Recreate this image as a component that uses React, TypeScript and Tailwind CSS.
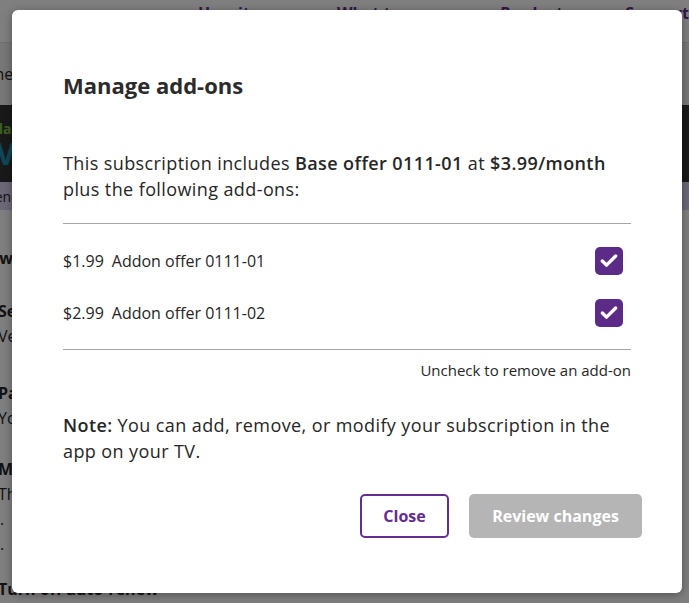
import { Check } from "lucide-react";

const FONT = "font-['Open_Sans',_'Liberation_Sans',_sans-serif]";

type Addon = { id: string; price: string; name: string };

const ADDONS: Addon[] = [
  { id: "a1", price: "$1.99", name: "Addon offer 0111-01" },
  { id: "a2", price: "$2.99", name: "Addon offer 0111-02" },
];

function BackgroundPage() {
  return (
    <div className="h-[603px] w-full overflow-hidden bg-white text-[#262626]">
      <nav className="flex h-[43px] items-start gap-[52px] border-b border-[#ddd] pl-[198px] pt-[1px] text-[16px] font-bold text-[#662d91]">
        <span>How it works</span>
        <span>What to watch ⌄</span>
        <span>Products ⌄</span>
        <span>Support</span>
      </nav>
      <div className="flex h-[62px] items-center bg-[#eee] text-[16px]">
        <span className="-ml-[32px]">Home</span>
      </div>
      <div className="flex h-[77px] flex-col justify-center bg-[#333]">
        <span className="-ml-[10px] text-[14px] font-bold text-[#7dc242]">Plan</span>
        <span className="-ml-[4px] text-[30px] font-bold leading-none text-[#1a8fb0]">V</span>
      </div>
      <div className="flex h-[28px] items-center bg-[#d8d0ee] text-[14px]">
        <span className="-ml-[14px]">Renex</span>
      </div>
      <div className="flex flex-col pt-[36px] text-[16px] leading-[25px]">
        <span className="-ml-[10px] font-bold">Two</span>
        <span className="-ml-[2px] mt-[28px] font-bold">Se</span>
        <span className="-ml-[2px]">Ve</span>
        <span className="-ml-[2px] mt-[32px] font-bold">Pa</span>
        <span className="-ml-[2px]">Yo</span>
        <span className="-ml-[2px] mt-[26px] font-bold">Ma</span>
        <span className="-ml-[2px]">Th</span>
        <span>.</span>
        <span>.</span>
        <span className="-ml-[2px] mt-[20px] font-bold">Turn off auto-renew</span>
      </div>
    </div>
  );
}

function AddonRow({ addon }: { addon: Addon }) {
  return (
    <li className="flex h-[28px] items-center justify-between">
      <span className="flex gap-[8px] text-[16px]">
        <span>{addon.price}</span>
        <span>{addon.name}</span>
      </span>
      <span className="mr-[8px] flex h-[28px] w-[28px] items-center justify-center rounded-[5px] bg-[#5c2b88] text-white">
        <Check className="h-[20px] w-[20px]" strokeWidth={4} />
      </span>
    </li>
  );
}

export default function App() {
  return (
    <div className={`relative h-[603px] w-full overflow-hidden ${FONT}`}>
      <BackgroundPage />
      <div className="absolute inset-0 bg-black/50" />
      <div className="absolute left-[12px] top-[10px] flex h-[583px] w-[670px] flex-col rounded-[6px] bg-white px-[51px] pt-[60px] text-[#262626] shadow-[0_2px_10px_rgba(0,0,0,0.35)]">
        <h2 className="text-[22px] font-bold leading-[30px] text-[#2b2b2b]">Manage add-ons</h2>

        <p className="mt-[50px] text-[18px] leading-[26px] tracking-[0.4px]">
          This subscription includes <span className="font-semibold">Base offer 0111-01</span> at{" "}
          <span className="font-semibold">$3.99/month</span> plus the following add-ons:
        </p>

        <ul className="mt-[21px] flex flex-col gap-[24px] border-y border-[#a6a6a6] pb-[22px] pt-[23px]">
          {ADDONS.map((a) => (
            <AddonRow key={a.id} addon={a} />
          ))}
        </ul>

        <p className="mt-[10px] text-right text-[15px] leading-[20px]">Uncheck to remove an add-on</p>

        <p className="mt-[32px] text-[18px] leading-[26px] tracking-[0.4px]">
          <span className="font-semibold">Note:</span> You can add, remove, or modify your subscription in the app on your TV.
        </p>

        <div className="-mr-[11px] mt-[30px] flex justify-end gap-[20px]">
          <button
            type="button"
            className="h-[44px] w-[89px] rounded-[5px] border-2 border-[#662d91] text-[16px] font-bold text-[#662d91]"
          >
            Close
          </button>
          <button
            type="button"
            className="h-[44px] w-[173px] rounded-[5px] bg-[#b5b5b5] text-[16px] font-bold text-white"
          >
            Review changes
          </button>
        </div>
      </div>
    </div>
  );
}
